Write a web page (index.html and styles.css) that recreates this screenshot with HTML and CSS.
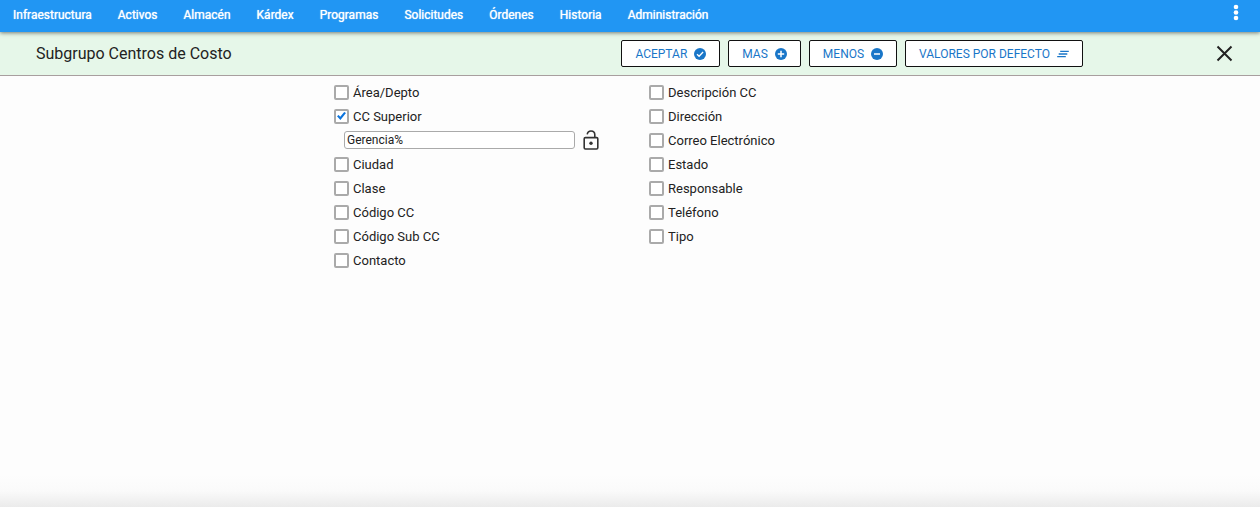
FILE: index.html
```html
<!DOCTYPE html>
<html lang="es">
<head>
<meta charset="utf-8">
<meta name="viewport" content="width=device-width, initial-scale=1">
<title>Subgrupo Centros de Costo</title>
<link rel="stylesheet" href="styles.css">
</head>
<body class="page">
<header class="topbar">
  <nav class="menu">
    <a class="menu-link" href="#">Infraestructura</a>
    <a class="menu-link" href="#">Activos</a>
    <a class="menu-link" href="#">Almacén</a>
    <a class="menu-link" href="#">Kárdex</a>
    <a class="menu-link" href="#">Programas</a>
    <a class="menu-link" href="#">Solicitudes</a>
    <a class="menu-link" href="#">Órdenes</a>
    <a class="menu-link" href="#">Historia</a>
    <a class="menu-link" href="#">Administración</a>
  </nav>
  <button class="icon-button more" type="button" aria-label="Más opciones">
    <svg width="6" height="18" viewBox="0 0 6 18" fill="#fff"><circle cx="3" cy="3" r="2.3"/><circle cx="3" cy="8.5" r="2.3"/><circle cx="3" cy="14" r="2.3"/></svg>
  </button>
</header>
<section class="titlebar">
  <h1 class="title">Subgrupo Centros de Costo</h1>
  <div class="actions">
    <button class="action" type="button">ACEPTAR
      <svg class="action-icon" viewBox="0 0 12 12"><circle cx="6" cy="6" r="6" fill="currentColor"/><path d="M3 6.2l2.1 2.1 4-4.3" fill="none" stroke="#fff" stroke-width="1.3"/></svg>
    </button>
    <button class="action" type="button">MAS
      <svg class="action-icon" viewBox="0 0 12 12"><circle cx="6" cy="6" r="6" fill="currentColor"/><path d="M6 2.8v6.4M2.8 6h6.4" stroke="#fff" stroke-width="1.5"/></svg>
    </button>
    <button class="action" type="button">MENOS
      <svg class="action-icon" viewBox="0 0 12 12"><circle cx="6" cy="6" r="6" fill="currentColor"/><path d="M3 6h6" stroke="#fff" stroke-width="1.5"/></svg>
    </button>
    <button class="action" type="button">VALORES POR DEFECTO
      <svg class="action-icon" viewBox="0 0 12 12"><path d="M3.2 3.4H11.8M1.7 6H10.3M.2 8.6H8.8" stroke="currentColor" stroke-width="1.4"/></svg>
    </button>
  </div>
  <button class="icon-button close" type="button" aria-label="Cerrar">
    <svg width="17" height="17" viewBox="0 0 17 17"><path d="M1.5 1.5l14 14M15.5 1.5l-14 14" stroke="#222" stroke-width="2"/></svg>
  </button>
</section>
<main class="fields">
  <div class="column">
    <label class="option"><input class="check" type="checkbox">Área/Depto</label>
    <label class="option"><input class="check" type="checkbox" checked>CC Superior</label>
    <div class="filter">
      <input class="filter-text" type="text" value="Gerencia%" aria-label="Filtro de CC Superior">
      <button class="icon-button" type="button" aria-label="Bloquear filtro">
        <svg width="16" height="20" viewBox="0 0 16 20" fill="none" stroke="#333" stroke-width="1.6"><rect x="1.2" y="7.6" width="13.6" height="11.4" rx="1.2"/><path d="M4.2 4.4C4.6 2.2 6 1 8 1c2.3 0 3.8 1.6 3.8 3.8v2.8"/><circle cx="8" cy="13.3" r="1.7" fill="#333" stroke="none"/></svg>
      </button>
    </div>
    <label class="option"><input class="check" type="checkbox">Ciudad</label>
    <label class="option"><input class="check" type="checkbox">Clase</label>
    <label class="option"><input class="check" type="checkbox">Código CC</label>
    <label class="option"><input class="check" type="checkbox">Código Sub CC</label>
    <label class="option"><input class="check" type="checkbox">Contacto</label>
  </div>
  <div class="column">
    <label class="option"><input class="check" type="checkbox">Descripción CC</label>
    <label class="option"><input class="check" type="checkbox">Dirección</label>
    <label class="option"><input class="check" type="checkbox">Correo Electrónico</label>
    <label class="option"><input class="check" type="checkbox">Estado</label>
    <label class="option"><input class="check" type="checkbox">Responsable</label>
    <label class="option"><input class="check" type="checkbox">Teléfono</label>
    <label class="option"><input class="check" type="checkbox">Tipo</label>
  </div>
</main>
<footer class="bottom-shade"></footer>
</body>
</html>
```
FILE: styles.css
```css
* {
  box-sizing: border-box;
}

.page {
  display: flex;
  flex-direction: column;
  min-height: 100vh;
  margin: 0;
  background: #fdfdfd;
  color: #222;
  font-family: Roboto, "Liberation Sans", sans-serif;
  font-size: 13px;
}

.topbar {
  position: relative;
  display: flex;
  align-items: center;
  justify-content: space-between;
  height: 32px;
  padding: 0 21px 2px 13px;
  background: #2196f3;
  box-shadow: 0 1px 4px rgba(0, 0, 0, 0.5);
}

.menu {
  display: flex;
  gap: 26px;
}

.menu-link {
  color: #fff;
  font-size: 12px;
  font-weight: 400;
  text-decoration: none;
  text-shadow: 0 0 1px #fff;
}

.icon-button {
  display: flex;
  padding: 0;
  border: 0;
  background: none;
}

.more {
  padding-bottom: 4px;
}

.titlebar {
  display: flex;
  align-items: center;
  height: 44px;
  padding: 0 27px 0 36px;
  border-bottom: 1px solid #a89f9f;
  background: #e6f7e9;
}

.title {
  flex: 1;
  margin: 0;
  font-size: 16px;
  font-weight: 400;
}

.actions {
  display: flex;
  gap: 8px;
}

.action {
  display: flex;
  align-items: center;
  gap: 7px;
  height: 27px;
  padding: 0 13px;
  border: 1px solid #111;
  border-radius: 2px;
  background: #fff;
  color: #1976c8;
  font-family: inherit;
  font-size: 12px;
}

.action-icon {
  width: 12px;
  height: 12px;
}

.close {
  margin-left: 133px;
}

.fields {
  display: grid;
  grid-template-columns: 1fr 1fr;
  flex: 1;
  align-items: start;
  width: 50%;
  margin: 0 auto;
  padding-top: 4px;
}

.column {
  display: flex;
  flex-direction: column;
  padding-left: 19px;
}

.option {
  display: flex;
  align-items: center;
  gap: 4px;
  height: 24px;
}

.check {
  display: grid;
  place-content: center;
  width: 15px;
  height: 15px;
  margin: 0;
  border: 2px solid #aaa;
  border-radius: 2px;
  background: #fff;
  appearance: none;
}

.check:checked::before {
  width: 9px;
  height: 8px;
  background: #0b74de;
  clip-path: polygon(0 54%, 18% 36%, 36% 58%, 80% 0, 100% 14%, 38% 100%);
  content: "";
}

.filter {
  display: flex;
  align-items: center;
  gap: 8px;
  height: 24px;
  padding: 0 31px 0 10px;
}

.filter-text {
  flex: 1;
  min-width: 0;
  height: 18px;
  padding: 0 2px;
  border: 1px solid #aaa;
  border-radius: 3px;
  background: #fff;
  color: #222;
  font-family: inherit;
  font-size: 12px;
}

.bottom-shade {
  height: 32px;
  background: linear-gradient(#fdfdfd, #fafafa 50%, #ebebeb);
}
```
